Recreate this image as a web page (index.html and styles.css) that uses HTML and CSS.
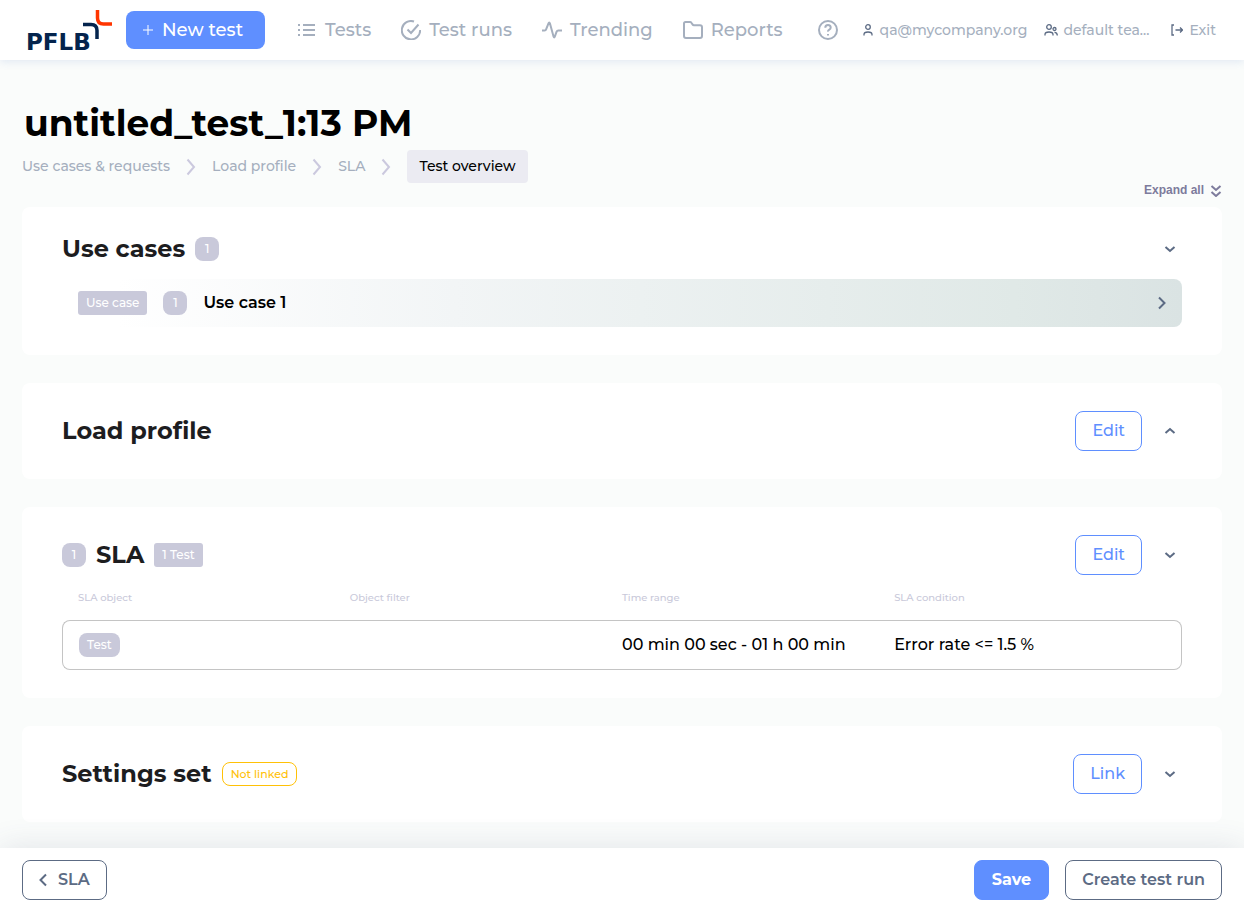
FILE: index.html
```html
<!DOCTYPE html>
<html lang="en">
<head>
<meta charset="utf-8">
<meta name="viewport" content="width=device-width, initial-scale=1">
<title>untitled_test_1:13 PM</title>
<link rel="stylesheet" href="styles.css">
</head>
<body>
<svg class="defs" aria-hidden="true">
  <symbol id="down" viewBox="0 0 12 12"><path d="M1.5 4 6 8 10.500 4"/></symbol>
  <symbol id="up" viewBox="0 0 12 12"><path d="M1.500 8 6 4 10.500 8"/></symbol>
</svg>
<header class="topbar">
  <a class="logo" href="#" aria-label="PFLB">
    <svg width="86" height="52" viewBox="0 -6 86 52">
      <text class="logo-text" x="-1" y="40">PFLB</text>
      <path d="M56 14.500h8q6 0 6 6v8.500" fill="none" stroke="#04244d" stroke-width="3.500"/>
      <path d="M70.500 0v8q0 6 6 6h8.500" fill="none" stroke="#ff3500" stroke-width="3.500"/>
    </svg>
  </a>
  <button class="btn-new" type="button"><svg width="12" height="12" viewBox="0 0 12 12"><path d="M6 1v10M1 6h10"/></svg>New test</button>
  <nav class="nav">
    <a href="#"><svg width="20" height="20" viewBox="0 0 20 20"><path d="M6 5h12M6 10h12M6 15h12M1 5h2M1 10h2M1 15h2"/></svg>Tests</a>
    <a href="#"><svg width="20" height="20" viewBox="0 0 20 20"><path d="M13 1.500A9.200 9.200 0 1 0 19.200 10M6.500 9.500 10 13 17.500 4.500"/></svg>Test runs</a>
    <a href="#"><svg width="20" height="20" viewBox="0 0 20 20"><path d="M0 10.500h2.500q1.300 0 1.700-1.300L6.500 3.300q.7-1.800 1.400 0l3.700 13.400q.6 1.500 1.200 0l1.800-5q.5-1.200 1.700-1.200H20"/></svg>Trending</a>
    <a href="#"><svg width="20" height="20" viewBox="0 0 20 20"><path d="M2.500 2h4.500q.9 0 1.400.8l1.100 1.600q.5.800 1.500.800h6q2 0 2 2v8.800q0 2-2 2H3q-2 0-2-2V3.500Q1 2 2.500 2z"/></svg>Reports</a>
  </nav>
  <div class="account">
    <a class="help" href="#" aria-label="Help"><svg width="20" height="20" viewBox="0 0 20 20"><circle cx="10" cy="10" r="9"/><path d="M7.300 7.700q0-2.700 2.700-2.700t2.700 2.500q0 1.300-1.400 2.100T10 11.700M10 14v1.500"/></svg></a>
    <a href="#"><svg class="dark" width="10" height="12" viewBox="0 0 10 12"><circle cx="5" cy="3" r="2.300"/><path d="M1 11.500V10.500Q1 8 5 8T9 10.500V11.500"/></svg>qa@mycompany.org</a>
    <a class="team" href="#"><svg class="dark" width="14" height="12" viewBox="0 0 14 12"><circle cx="5" cy="3" r="2.300"/><path d="M1 11.500V10.500Q1 8 5 8T9 10.500V11.500"/><circle cx="10.500" cy="5" r="1.500"/><path d="M10.500 8.300Q13.300 8.300 13.300 11.500"/></svg>default tea...</a>
    <a class="exit" href="#"><svg class="dark" width="12" height="12" viewBox="0 0 12 12"><path d="M3 1H1v10h2M4.500 6h7M9 3.500 11.500 6 9 8.500"/></svg>Exit</a>
  </div>
</header>

<main class="page">
  <h1>untitled_test_1:13 PM</h1>
  <nav class="crumbs" aria-label="Steps">
    <a href="#">Use cases &amp; requests</a>
    <svg width="10" height="18" viewBox="0 0 10 18"><path d="M1.500 1.500 8 9 1.500 16.500"/></svg>
    <a href="#">Load profile</a>
    <svg width="10" height="18" viewBox="0 0 10 18"><path d="M1.500 1.500 8 9 1.500 16.500"/></svg>
    <a href="#">SLA</a>
    <svg width="10" height="18" viewBox="0 0 10 18"><path d="M1.500 1.500 8 9 1.500 16.500"/></svg>
    <a class="current" href="#" aria-current="page">Test overview</a>
  </nav>
  <button class="expand" type="button">Expand all<svg width="12" height="14" viewBox="0 0 12 14"><path d="M1.500 3 6 7 10.500 3M1.500 9 6 13 10.500 9"/></svg></button>

  <div class="cards">
    <section class="card">
      <div class="card-head">
        <h2>Use cases</h2><span class="chip count">1</span>
        <button class="toggle" type="button" aria-label="Toggle use cases"><svg><use href="#down"/></svg></button>
      </div>
      <a class="case" href="#">
        <span class="chip square">Use case</span><span class="chip count">1</span><span>Use case 1</span>
        <svg class="case-arrow" width="8" height="14" viewBox="0 0 8 14"><path d="M1 1.500 6.500 7 1 12.500"/></svg>
      </a>
    </section>

    <section class="card">
      <div class="card-head">
        <h2>Load profile</h2>
        <div class="actions"><button class="btn-line" type="button">Edit</button>
        <button class="toggle" type="button" aria-label="Toggle load profile"><svg><use href="#up"/></svg></button></div>
      </div>
    </section>

    <section class="card">
      <div class="card-head">
        <span class="chip count">1</span><h2>SLA</h2><span class="chip square">1 Test</span>
        <div class="actions"><button class="btn-line" type="button">Edit</button>
        <button class="toggle" type="button" aria-label="Toggle SLA"><svg><use href="#down"/></svg></button></div>
      </div>
      <table class="sla">
        <thead><tr><th>SLA object</th><th>Object filter</th><th>Time range</th><th>SLA condition</th></tr></thead>
        <tbody><tr><td><span class="chip">Test</span></td><td></td><td>00 min 00 sec - 01 h 00 min</td><td>Error rate &lt;= 1.5 %</td></tr></tbody>
      </table>
    </section>

    <section class="card">
      <div class="card-head">
        <h2>Settings set</h2><span class="chip warn">Not linked</span>
        <div class="actions"><button class="btn-line" type="button">Link</button>
        <button class="toggle" type="button" aria-label="Toggle settings set"><svg><use href="#down"/></svg></button></div>
      </div>
    </section>
  </div>
</main>

<footer class="bottombar">
  <button class="btn-foot back" type="button"><svg width="8" height="14" viewBox="0 0 8 14"><path d="M7 1.500 1.500 7 7 12.500"/></svg>SLA</button>
  <button class="btn-foot save" type="button">Save</button>
  <button class="btn-foot" type="button">Create test run</button>
</footer>
</body>
</html>
```
FILE: styles.css
```css
* { box-sizing: border-box; }

body {
  margin: 0;
  min-height: 100vh;
  display: flex;
  flex-direction: column;
  background: #fafcfb;
  color: #000;
  font: 500 16px/24px Montserrat, Inter, "Open Sans", sans-serif;
}

a { color: inherit; text-decoration: none; }
button { font: inherit; cursor: pointer; }
svg { flex: none; fill: none; stroke: currentColor; stroke-width: 2; }
.defs { position: absolute; width: 0; height: 0; }
h1, h2 { margin: 0; }

/* Top bar */
.topbar {
  display: flex;
  align-items: center;
  height: 60px;
  padding: 0 28px 0 27px;
  background: #fff;
  color: #a5afbe;
  box-shadow: 0 2px 8px rgba(80, 120, 200, 0.14);
  white-space: nowrap;
}
.logo { display: flex; margin-right: 13px; }
.logo svg { overflow: visible; }
.logo-text {
  fill: #04244d;
  stroke: none;
  font: 700 23px "DejaVu Sans", sans-serif;
}
.btn-new {
  display: flex;
  align-items: center;
  gap: 8px;
  height: 38px;
  margin-right: 32px;
  padding: 0 22px 0 16px;
  border: 0;
  border-radius: 8px;
  background: #5f8fff;
  color: #fff;
  font-size: 18px;
}
.btn-new svg { stroke-width: 1; }
.nav { display: flex; gap: 30px; font-size: 18px; }
.nav a { display: flex; align-items: center; gap: 8px; }
.account {
  display: flex;
  align-items: center;
  gap: 17px;
  margin-left: auto;
  font-size: 14px;
}
.account a { display: flex; align-items: center; gap: 7px; }
.account .help { margin-right: 8px; }
.account .team { gap: 5px; }
.account .exit { gap: 6px; margin-left: 5px; }
.help svg { stroke-width: 2; }
.dark { color: #5c6b84; stroke-width: 1.3; }

/* Page heading */
.page { flex: 1; padding: 41px 22px 26px; }
h1 { margin: 0 2px 5px; font-size: 36px; line-height: 44px; font-weight: 700; }
.crumbs {
  display: flex;
  align-items: center;
  gap: 16px;
  height: 33px;
  color: #a5afbe;
  font-size: 14px;
}
.crumbs a { line-height: 33px; }
.crumbs svg { color: #cbc9de; }
.crumbs .current {
  padding: 0 12px;
  border-radius: 4px;
  background: #ebebf2;
  color: #000;
}
.expand {
  display: flex;
  align-items: center;
  gap: 6px;
  height: 14px;
  margin: 0 0 10px auto;
  padding: 0;
  border: 0;
  background: none;
  color: #7d7b9c;
  font: 700 12px/14px "Liberation Sans", sans-serif;
}

/* Cards */
.cards { display: grid; gap: 28px; }
.card { padding: 28px 40px; border-radius: 8px; background: #fff; }
.card-head { display: flex; align-items: center; gap: 10px; min-height: 28px; }
h2 { color: #1d1d1f; font-size: 24px; line-height: 28px; font-weight: 700; }
.chip {
  display: inline-block;
  padding: 0 8px;
  border-radius: 8px;
  background: #c9c9da;
  color: #fff;
  font-size: 12px;
  line-height: 24px;
}
.chip.square { border-radius: 3px; }
.chip.count { width: 24px; padding: 0; text-align: center; }
.chip.warn {
  border: 1px solid #ffc107;
  background: none;
  color: #ffc107;
  font-size: 11px;
  line-height: 22px;
}
.actions { display: flex; align-items: center; gap: 16px; margin-left: auto; }
.btn-line {
  height: 40px;
  padding: 0 16px;
  border: 1px solid #5f8fff;
  border-radius: 8px;
  background: #fff;
  color: #5f8fff;
}
.toggle {
  display: flex;
  align-items: center;
  justify-content: center;
  width: 24px;
  height: 24px;
  margin-left: auto;
  padding: 0;
  border: 0;
  background: none;
  color: #5c6b84;
}
.toggle svg { width: 12px; height: 12px; }

.case {
  display: flex;
  align-items: center;
  gap: 16px;
  height: 48px;
  margin-top: 16px;
  padding: 0 16px;
  border-radius: 8px;
  background: linear-gradient(90deg, #fff 5%, #f2f5f6 35%, #e0e9e7 85%, #dae3e3);
  font-weight: 600;
}
.case .chip { font-weight: 500; }
.case-arrow { margin-left: auto; color: #5c6b84; }

.sla { width: 100%; border-spacing: 0; table-layout: fixed; text-align: left; }
.sla th {
  width: 24.3%;
  height: 45px;
  padding: 0;
  color: #c9c9da;
  font-size: 10px;
  font-weight: 500;
}
.sla th:first-child { width: 25.7%; padding-left: 16px; }
.sla th:last-child { width: auto; }
.sla td {
  height: 50px;
  padding: 0;
  border: solid #c4c4c4;
  border-width: 1px 0;
}
.sla .chip { display: block; width: max-content; }
.sla td:first-child { padding-left: 16px; border-left-width: 1px; border-radius: 8px 0 0 8px; }
.sla td:last-child { border-right-width: 1px; border-radius: 0 8px 8px 0; }

/* Bottom bar */
.bottombar {
  position: sticky;
  bottom: 0;
  display: flex;
  align-items: center;
  gap: 16px;
  height: 64px;
  padding: 0 22px;
  background: #fff;
  box-shadow: 0 0 32px rgba(70, 80, 110, 0.14);
}
.btn-foot {
  display: flex;
  align-items: center;
  gap: 11px;
  height: 40px;
  padding: 0 16px;
  border: 1px solid #5c6b84;
  border-radius: 8px;
  background: #fff;
  color: #5c6b84;
  font-weight: 600;
}
.btn-foot.back { margin-right: auto; }
.btn-foot.save { padding: 0 17px; border-color: #5f8fff; background: #5f8fff; color: #fff; font-weight: 700; }
```
